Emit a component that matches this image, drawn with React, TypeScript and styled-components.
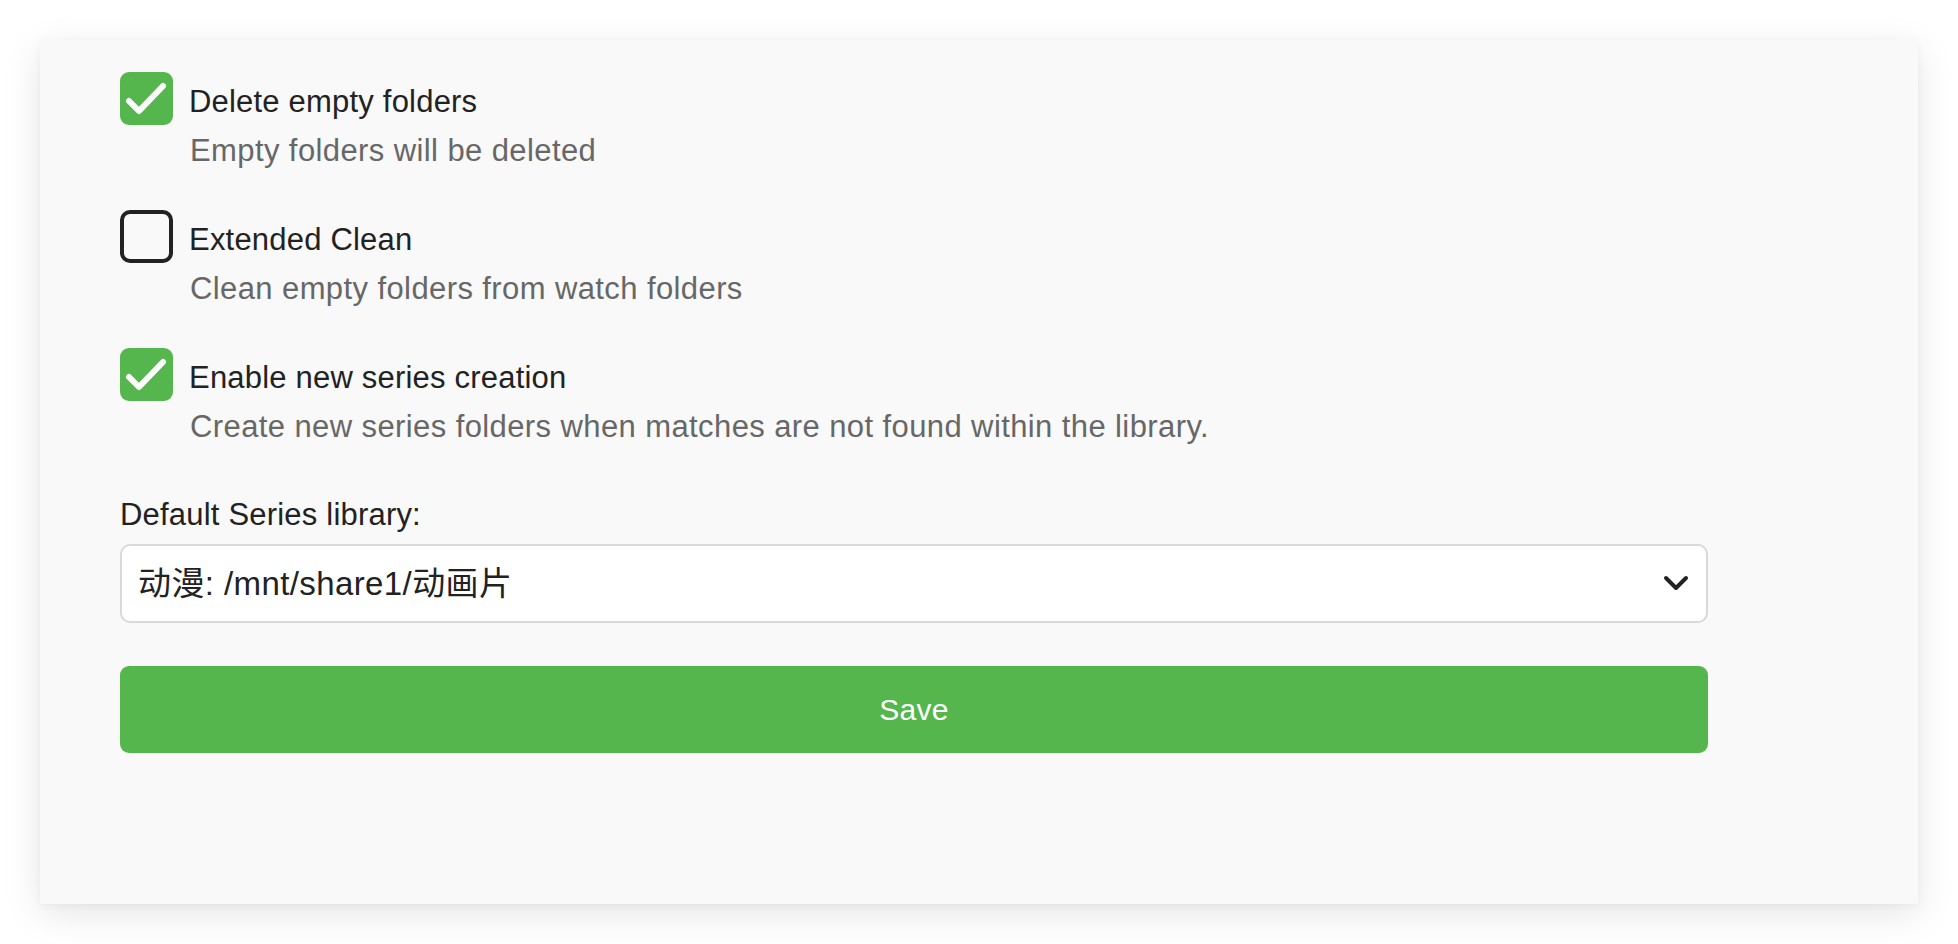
import React, { FC, useState } from 'react'
import styled, { createGlobalStyle } from 'styled-components'

const GlobalStyle = createGlobalStyle`
  html, body {
    margin: 0;
    padding: 0;
    background: #ffffff;
  }
  body {
    font-family: "Liberation Sans", "Noto Sans CJK SC", sans-serif;
    color: #222222;
  }
  * {
    box-sizing: border-box;
  }
`

interface IOption {
  key: string
  title: string
  hint: string
  checked: boolean
}

const initialOptions: IOption[] = [
  { key: 'delete', title: 'Delete empty folders', hint: 'Empty folders will be deleted', checked: true },
  { key: 'extended', title: 'Extended Clean', hint: 'Clean empty folders from watch folders', checked: false },
  {
    key: 'series',
    title: 'Enable new series creation',
    hint: 'Create new series folders when matches are not found within the library.',
    checked: true,
  },
]

const CheckIcon: FC = () => (
  <svg width="53" height="53" viewBox="0 0 53 53" fill="none">
    <polyline
      points="9,29 19,39 43,14"
      stroke="#ffffff"
      strokeWidth="6"
      strokeLinecap="round"
      strokeLinejoin="round"
    />
  </svg>
)

const Chevron: FC = () => (
  <svg width="26" height="16" viewBox="0 0 26 16" fill="none">
    <polyline
      points="3,3 13,13 23,3"
      stroke="#222222"
      strokeWidth="4"
      strokeLinecap="round"
      strokeLinejoin="round"
    />
  </svg>
)

const App: FC = () => {
  const [options, setOptions] = useState(initialOptions)

  const toggle = (key: string) =>
    setOptions(prev => prev.map(o => (o.key === key ? { ...o, checked: !o.checked } : o)))

  return (
    <>
      <GlobalStyle />
      <Page>
        <Card>
          <Options>
            {options.map(o => (
              <Option key={o.key}>
                <OptionRow onClick={() => toggle(o.key)}>
                  <Box checked={o.checked}>{o.checked && <CheckIcon />}</Box>
                  <Title>{o.title}</Title>
                </OptionRow>
                <Hint>{o.hint}</Hint>
              </Option>
            ))}
          </Options>

          <FieldLabel>Default Series library:</FieldLabel>
          <SelectWrap>
            <Select defaultValue="anime">
              <option value="anime">动漫: /mnt/share1/动画片</option>
            </Select>
            <ChevronSlot>
              <Chevron />
            </ChevronSlot>
          </SelectWrap>

          <SaveButton type="button">Save</SaveButton>
        </Card>
      </Page>
    </>
  )
}

export default App

const Page = styled.div`
  padding: 40px 40px 41px 40px;
`
const Card = styled.div`
  display: flex;
  flex-direction: column;
  background: #f9f9f9;
  padding: 32px 210px 151px 80px;
  box-shadow: 0 10px 36px rgba(0, 0, 0, 0.1), 0 2px 8px rgba(0, 0, 0, 0.04);
`
const Options = styled.div`
  display: flex;
  flex-direction: column;
  gap: 41px;
`
const Option = styled.div`
  display: flex;
  flex-direction: column;
`
const OptionRow = styled.label`
  display: flex;
  align-items: center;
  gap: 16px;
  cursor: pointer;
`
const Box = styled.span<{ checked: boolean }>`
  flex: none;
  display: flex;
  width: 53px;
  height: 53px;
  border-radius: ${p => (p.checked ? '9px' : '10px')};
  background: ${p => (p.checked ? '#55b64d' : 'transparent')};
  border: ${p => (p.checked ? 'none' : '4px solid #222222')};
`
const Title = styled.span`
  font-size: 31px;
  line-height: 36px;
  letter-spacing: 0.2px;
  padding-top: 7px;
  color: #222222;
`
const Hint = styled.div`
  margin-top: 8px;
  padding-left: 70px;
  font-size: 31px;
  line-height: 36px;
  letter-spacing: 0.4px;
  color: #676767;
`
const FieldLabel = styled.div`
  margin-top: 52px;
  font-size: 31px;
  line-height: 36px;
  letter-spacing: 0.2px;
  color: #222222;
`
const SelectWrap = styled.div`
  position: relative;
  margin-top: 11px;
`
const Select = styled.select`
  appearance: none;
  -webkit-appearance: none;
  width: 100%;
  height: 79px;
  padding: 0 60px 0 16px;
  background: #ffffff;
  border: 2px solid #d9d9d9;
  border-radius: 10px;
  font-family: "Liberation Sans", "Noto Sans CJK SC", sans-serif;
  font-size: 33px;
  letter-spacing: 0.4px;
  color: #222222;
  outline: none;
`
const ChevronSlot = styled.span`
  position: absolute;
  right: 19px;
  top: 31px;
  display: flex;
  pointer-events: none;
`
const SaveButton = styled.button`
  margin-top: 43px;
  height: 87px;
  width: 100%;
  border: none;
  border-radius: 9px;
  background: #55b64d;
  color: #ffffff;
  font-family: "Liberation Sans", "Noto Sans CJK SC", sans-serif;
  font-size: 30px;
  letter-spacing: 0.3px;
  cursor: pointer;
`
